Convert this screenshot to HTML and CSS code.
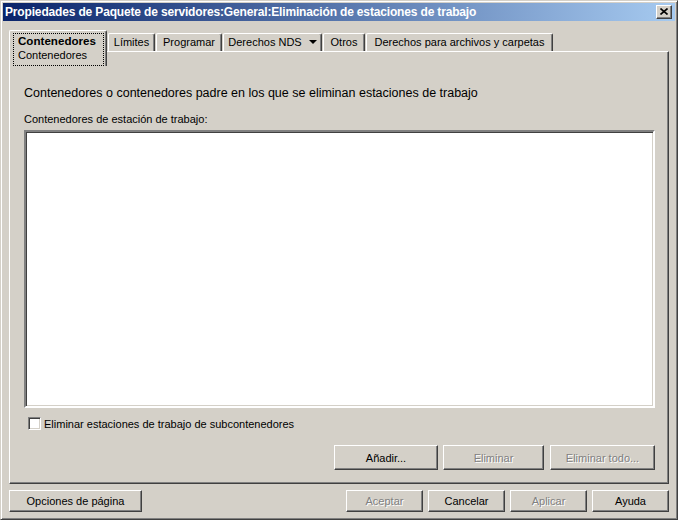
FILE: index.html
```html
<!DOCTYPE html>
<html lang="es">
<head>
<meta charset="utf-8">
<title>Propiedades de Paquete de servidores</title>
<link rel="stylesheet" href="styles.css">
</head>
<body>
<div class="window">
  <div class="titlebar">
    <span class="title">Propiedades de Paquete de servidores:General:Eliminación de estaciones de trabajo</span>
    <button class="close" type="button" aria-label="Cerrar">
      <svg width="8" height="7" viewBox="0 0 8 7"><path d="M0.5 0.5 L7.5 6.5 M7.5 0.5 L0.5 6.5" stroke="#000" stroke-width="1.6" fill="none"/></svg>
    </button>
  </div>
  <div class="client">
    <div class="tabstrip">
      <div class="tab active">
        <div class="focus">
          <span class="tab-main">Contenedores</span>
          <span class="tab-sub">Contenedores</span>
        </div>
      </div>
      <div class="tab w-lim">Límites</div>
      <div class="tab w-prog">Programar</div>
      <div class="tab w-nds">Derechos NDS <span class="caret"></span></div>
      <div class="tab w-otros">Otros</div>
      <div class="tab w-arch">Derechos para archivos y carpetas</div>
    </div>
    <div class="panel">
      <p class="heading">Contenedores o contenedores padre en los que se eliminan estaciones de trabajo</p>
      <p class="label">Contenedores de estación de trabajo:</p>
      <div class="list"></div>
      <label class="check"><span class="box"></span>Eliminar estaciones de trabajo de subcontenedores</label>
      <div class="panel-buttons">
        <button class="btn w-add" type="button">Añadir...</button>
        <button class="btn w-del disabled" type="button">Eliminar</button>
        <button class="btn w-delall disabled" type="button">Eliminar todo...</button>
      </div>
    </div>
    <div class="footer">
      <button class="btn w-opc" type="button">Opciones de página</button>
      <div class="footer-right">
        <button class="btn w-std disabled" type="button">Aceptar</button>
        <button class="btn w-std" type="button">Cancelar</button>
        <button class="btn w-std disabled" type="button">Aplicar</button>
        <button class="btn w-std" type="button">Ayuda</button>
      </div>
    </div>
  </div>
</div>
</body>
</html>
```
FILE: styles.css
```css
* { box-sizing: border-box; }
html, body { margin: 0; padding: 0; }
body {
  width: 678px;
  height: 520px;
  background: #d4d0c8;
  font-family: "Liberation Sans", Arial, sans-serif;
  font-size: 11px;
  color: #000;
  overflow: hidden;
}
.window {
  width: 678px;
  height: 520px;
  border: 1px solid;
  border-color: #d4d0c8 #404040 #404040 #d4d0c8;
  box-shadow: inset 1px 1px 0 #fff, inset -1px -1px 0 #808080;
  padding: 2px;
  background: #d4d0c8;
  display: flex;
  flex-direction: column;
}
.titlebar {
  height: 18px;
  background: linear-gradient(to right, #0a246a, #a6caf0);
  display: flex;
  align-items: center;
  padding: 0 3px 0 2px;
}
.title {
  flex: 1;
  color: #fff;
  font-weight: bold;
  font-size: 12px;
  letter-spacing: -0.16px;
  white-space: nowrap;
  overflow: hidden;
}
.close {
  width: 16px;
  height: 14px;
  padding: 0;
  margin: 0;
  background: #d4d0c8;
  border: 1px solid;
  border-color: #fff #404040 #404040 #fff;
  box-shadow: inset -1px -1px 0 #808080;
  display: flex;
  align-items: center;
  justify-content: center;
}
.close svg { display: block; margin: 0 1px 1px 0; }
.client {
  flex: 1;
  padding: 9px 6px 5px 6px;
  display: flex;
  flex-direction: column;
}
.tabstrip {
  height: 21px;
  display: flex;
  align-items: flex-start;
}
.tab {
  margin-top: 3px;
  margin-left: 1px;
  height: 18px;
  border-top: 1px solid #fff;
  border-left: 1px solid #fff;
  border-right: 1px solid #404040;
  box-shadow: inset -1px 0 0 #808080;
  border-top-left-radius: 2px;
  border-top-right-radius: 2px;
  background: #d4d0c8;
  display: flex;
  align-items: center;
  justify-content: center;
  white-space: nowrap;
  padding-bottom: 1px;
}
.tab.active {
  position: relative;
  z-index: 2;
  margin: 0;
  width: 98px;
  height: 36px;
  align-items: flex-start;
  justify-content: flex-start;
  padding: 2px 2px 0 3px;
}
.focus {
  width: 92px;
  height: 33px;
  border: 1px dotted #000;
  padding: 0 0 0 4px;
  display: flex;
  flex-direction: column;
}
.tab-main { font-weight: bold; font-size: 11.6px; line-height: 14px; }
.tab-sub { line-height: 14px; }
.w-lim { width: 47px; }
.w-prog { width: 66px; }
.w-nds { width: 99px; }
.w-otros { width: 42px; }
.w-arch { width: 187px; }
.caret {
  display: inline-block;
  width: 0;
  height: 0;
  margin-left: 7px;
  border-left: 4px solid transparent;
  border-right: 4px solid transparent;
  border-top: 4px solid #000;
}
.panel {
  height: 433px;
  border: 1px solid;
  border-color: #fff #404040 #404040 #fff;
  box-shadow: inset -1px -1px 0 #808080;
  padding: 34px 13px 0 14px;
  display: flex;
  flex-direction: column;
}
.heading {
  margin: 0;
  font-size: 12.5px;
  line-height: 14px;
  white-space: nowrap;
}
.label {
  margin: 13px 0 0 0;
  line-height: 13px;
  white-space: nowrap;
}
.list {
  margin-top: 4px;
  height: 278px;
  background: #fff;
  border: 2px solid;
  border-color: #808080 #fff #fff #808080;
  box-shadow: inset 1px 1px 0 #404040, inset -1px -1px 0 #d4d0c8;
}
.check {
  margin: 9px 0 0 4px;
  height: 13px;
  display: flex;
  align-items: center;
  white-space: nowrap;
}
.box {
  width: 13px;
  height: 13px;
  margin-right: 3px;
  background: #fff;
  border: 1px solid;
  border-color: #808080 #fff #fff #808080;
  box-shadow: inset 1px 1px 0 #404040, inset -1px -1px 0 #d4d0c8;
}
.panel-buttons {
  margin-top: 15px;
  display: flex;
  justify-content: flex-end;
  gap: 5px;
}
.panel-buttons .btn { height: 25px; }
.panel-buttons .w-delall { margin-left: 1px; }
.btn {
  font-family: "Liberation Sans", Arial, sans-serif;
  font-size: 11px;
  color: #000;
  background: #d4d0c8;
  border: 1px solid;
  border-color: #fff #404040 #404040 #fff;
  box-shadow: inset -1px -1px 0 #808080;
  padding: 0;
  margin: 0;
  height: 22px;
  white-space: nowrap;
}
.btn.disabled {
  color: #808080;
  text-shadow: 1px 1px 0 #fff;
}
.w-add { width: 104px; }
.w-del { width: 101px; }
.w-delall { width: 105px; }
.footer {
  margin-top: 6px;
  height: 22px;
  display: flex;
  justify-content: space-between;
}
.w-opc { width: 133px; }
.footer-right { display: flex; gap: 5px; }
.w-std { width: 77px; }
```
